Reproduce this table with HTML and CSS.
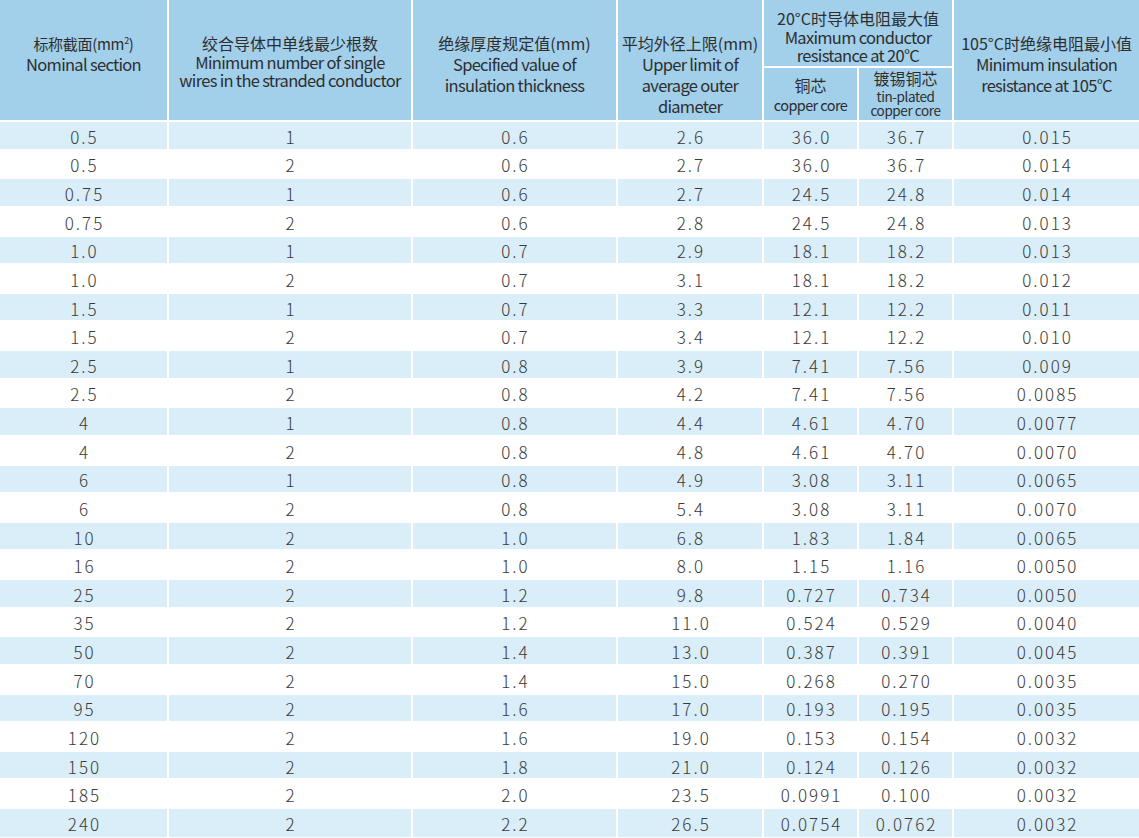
FILE: index.html
```html
<!DOCTYPE html>
<html lang="zh">
<head>
<meta charset="utf-8">
<link rel="stylesheet" href="styles.css">
</head>
<body>
<table class="spec">
  <colgroup>
    <col class="c1"><col class="c2"><col class="c3"><col class="c4"><col class="c5"><col class="c6"><col class="c7">
  </colgroup>
  <thead>
    <tr class="h1">
      <th rowspan="2" class="top"><div class="cn narrow">标称截面(mm<sup>2</sup>)</div><div class="en">Nominal section</div></th>
      <th rowspan="2" class="top"><div class="cn">绞合导体中单线最少根数</div><div class="en tight">Minimum number of single<br>wires in the stranded conductor</div></th>
      <th rowspan="2" class="top"><div class="cn">绝缘厚度规定值(mm)</div><div class="en">Specified value of<br>insulation thickness</div></th>
      <th rowspan="2" class="top"><div class="cn">平均外径上限(mm)</div><div class="en">Upper limit of<br>average outer<br>diameter</div></th>
      <th colspan="2" class="group"><div class="cn">20°C时导体电阻最大值</div><div class="en tight">Maximum conductor<br>resistance at 20°C</div></th>
      <th rowspan="2" class="top"><div class="cn">105°C时绝缘电阻最小值</div><div class="en">Minimum insulation<br>resistance at 105°C</div></th>
    </tr>
    <tr class="h2">
      <th class="sub"><div class="cn">铜芯</div><div class="en small">copper core</div></th>
      <th class="sub sub-tin"><div class="cn">镀锡铜芯</div><div class="en smaller">tin-plated<br>copper core</div></th>
    </tr>
  </thead>
  <tbody>
    <tr><td>0.5</td><td>1</td><td>0.6</td><td>2.6</td><td>36.0</td><td>36.7</td><td>0.015</td></tr>
    <tr><td>0.5</td><td>2</td><td>0.6</td><td>2.7</td><td>36.0</td><td>36.7</td><td>0.014</td></tr>
    <tr><td>0.75</td><td>1</td><td>0.6</td><td>2.7</td><td>24.5</td><td>24.8</td><td>0.014</td></tr>
    <tr><td>0.75</td><td>2</td><td>0.6</td><td>2.8</td><td>24.5</td><td>24.8</td><td>0.013</td></tr>
    <tr><td>1.0</td><td>1</td><td>0.7</td><td>2.9</td><td>18.1</td><td>18.2</td><td>0.013</td></tr>
    <tr><td>1.0</td><td>2</td><td>0.7</td><td>3.1</td><td>18.1</td><td>18.2</td><td>0.012</td></tr>
    <tr><td>1.5</td><td>1</td><td>0.7</td><td>3.3</td><td>12.1</td><td>12.2</td><td>0.011</td></tr>
    <tr><td>1.5</td><td>2</td><td>0.7</td><td>3.4</td><td>12.1</td><td>12.2</td><td>0.010</td></tr>
    <tr><td>2.5</td><td>1</td><td>0.8</td><td>3.9</td><td>7.41</td><td>7.56</td><td>0.009</td></tr>
    <tr><td>2.5</td><td>2</td><td>0.8</td><td>4.2</td><td>7.41</td><td>7.56</td><td>0.0085</td></tr>
    <tr><td>4</td><td>1</td><td>0.8</td><td>4.4</td><td>4.61</td><td>4.70</td><td>0.0077</td></tr>
    <tr><td>4</td><td>2</td><td>0.8</td><td>4.8</td><td>4.61</td><td>4.70</td><td>0.0070</td></tr>
    <tr><td>6</td><td>1</td><td>0.8</td><td>4.9</td><td>3.08</td><td>3.11</td><td>0.0065</td></tr>
    <tr><td>6</td><td>2</td><td>0.8</td><td>5.4</td><td>3.08</td><td>3.11</td><td>0.0070</td></tr>
    <tr><td>10</td><td>2</td><td>1.0</td><td>6.8</td><td>1.83</td><td>1.84</td><td>0.0065</td></tr>
    <tr><td>16</td><td>2</td><td>1.0</td><td>8.0</td><td>1.15</td><td>1.16</td><td>0.0050</td></tr>
    <tr><td>25</td><td>2</td><td>1.2</td><td>9.8</td><td>0.727</td><td>0.734</td><td>0.0050</td></tr>
    <tr><td>35</td><td>2</td><td>1.2</td><td>11.0</td><td>0.524</td><td>0.529</td><td>0.0040</td></tr>
    <tr><td>50</td><td>2</td><td>1.4</td><td>13.0</td><td>0.387</td><td>0.391</td><td>0.0045</td></tr>
    <tr><td>70</td><td>2</td><td>1.4</td><td>15.0</td><td>0.268</td><td>0.270</td><td>0.0035</td></tr>
    <tr><td>95</td><td>2</td><td>1.6</td><td>17.0</td><td>0.193</td><td>0.195</td><td>0.0035</td></tr>
    <tr><td>120</td><td>2</td><td>1.6</td><td>19.0</td><td>0.153</td><td>0.154</td><td>0.0032</td></tr>
    <tr><td>150</td><td>2</td><td>1.8</td><td>21.0</td><td>0.124</td><td>0.126</td><td>0.0032</td></tr>
    <tr><td>185</td><td>2</td><td>2.0</td><td>23.5</td><td>0.0991</td><td>0.100</td><td>0.0032</td></tr>
    <tr><td>240</td><td>2</td><td>2.2</td><td>26.5</td><td>0.0754</td><td>0.0762</td><td>0.0032</td></tr>
  </tbody>
</table>
</body>
</html>
```
FILE: styles.css
```css
html, body {
  margin: 0;
  padding: 0;
  background: #ffffff;
}
.spec {
  width: 1139px;
  table-layout: fixed;
  border-collapse: collapse;
  border-style: hidden;
  font-family: "Noto Sans CJK SC", "Noto Sans", sans-serif;
  color: #2b2b2b;
}
.c1 { width: 168px; }
.c2 { width: 244px; }
.c3 { width: 205px; }
.c4 { width: 146px; }
.c5 { width: 95px; }
.c6 { width: 95px; }
.c7 { width: 186px; }

.spec th, .spec td {
  border: 2px solid #ffffff;
  padding: 0;
  text-align: center;
}
.spec th {
  background: #a2cfea;
  font-weight: 400;
  color: #2e2e2e;
}
.h1 { height: 67px; }
.h2 { height: 54px; }
th.top {
  vertical-align: top;
  padding-top: 33px;
}
th.group {
  vertical-align: top;
  padding-top: 8px;
}
th.sub {
  vertical-align: top;
  padding-top: 7px;
}
th.sub-tin { padding-top: 0; }
.cn {
  font-size: 16px;
  line-height: 21px;
  white-space: nowrap;
}
.cn.narrow { font-size: 15px; letter-spacing: -0.3px; }
.cn sup {
  font-size: 9px;
  line-height: 0;
  vertical-align: 6px;
}
.en {
  font-size: 16.5px;
  line-height: 21px;
  letter-spacing: -0.7px;
  white-space: nowrap;
}
.en.tight { line-height: 17.5px; }
.en.small { font-size: 14.5px; line-height: 17px; letter-spacing: -0.6px; }
.en.smaller { font-size: 13.5px; line-height: 14px; letter-spacing: -0.4px; }

.spec tbody tr { height: 28.64px; }
.spec tbody td {
  font-family: "Noto Sans CJK SC", "Noto Sans", sans-serif;
  font-size: 17px;
  font-weight: 300;
  letter-spacing: 2px;
  padding: 3px 0 0 2px;
  color: #3a3a3a;
  line-height: 20px;
  vertical-align: middle;
}
.spec tbody tr:nth-child(odd) td { background: #daeef9; }
```
